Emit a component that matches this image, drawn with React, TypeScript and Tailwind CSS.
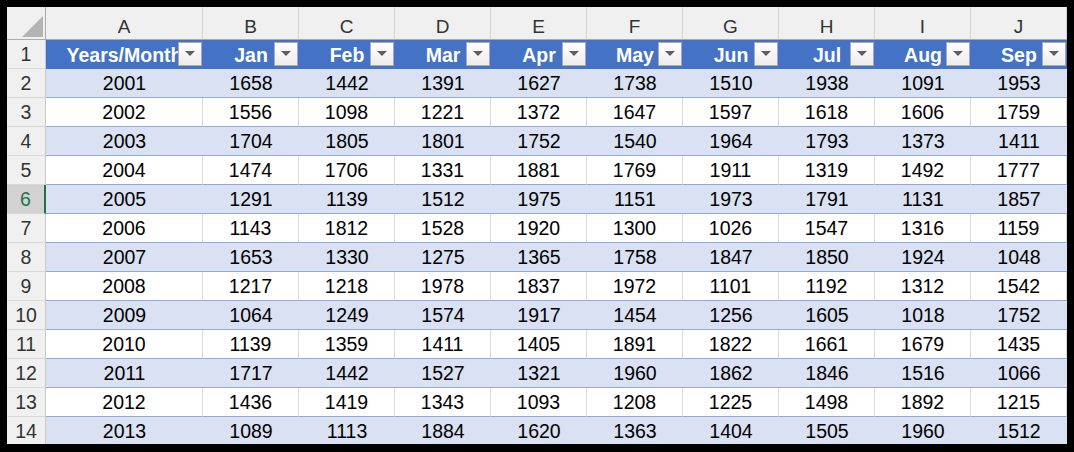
import React from "react";

const letters = ["A", "B", "C", "D", "E", "F", "G", "H", "I", "J"];
const months = ["Jan", "Feb", "Mar", "Apr", "May", "Jun", "Jul", "Aug", "Sep"];
const data: number[][] = [
  [2001, 1658, 1442, 1391, 1627, 1738, 1510, 1938, 1091, 1953],
  [2002, 1556, 1098, 1221, 1372, 1647, 1597, 1618, 1606, 1759],
  [2003, 1704, 1805, 1801, 1752, 1540, 1964, 1793, 1373, 1411],
  [2004, 1474, 1706, 1331, 1881, 1769, 1911, 1319, 1492, 1777],
  [2005, 1291, 1139, 1512, 1975, 1151, 1973, 1791, 1131, 1857],
  [2006, 1143, 1812, 1528, 1920, 1300, 1026, 1547, 1316, 1159],
  [2007, 1653, 1330, 1275, 1365, 1758, 1847, 1850, 1924, 1048],
  [2008, 1217, 1218, 1978, 1837, 1972, 1101, 1192, 1312, 1542],
  [2009, 1064, 1249, 1574, 1917, 1454, 1256, 1605, 1018, 1752],
  [2010, 1139, 1359, 1411, 1405, 1891, 1822, 1661, 1679, 1435],
  [2011, 1717, 1442, 1527, 1321, 1960, 1862, 1846, 1516, 1066],
  [2012, 1436, 1419, 1343, 1093, 1208, 1225, 1498, 1892, 1215],
  [2013, 1089, 1113, 1884, 1620, 1363, 1404, 1505, 1960, 1512],
];

const widthCls = (i: number) => (i === 0 ? "w-[157px]" : "w-[96px]");

function FilterButton() {
  return (
    <div className="absolute right-[1px] top-[2px] w-[24px] h-[24px] border border-[#ABABAB] bg-gradient-to-b from-[#FFFFFF] to-[#ECECEC] flex items-center justify-center">
      <svg width="10" height="6" viewBox="0 0 10 6">
        <polygon points="0,0 10,0 5,5" fill="#5F5F5F" />
      </svg>
    </div>
  );
}

function RowHeader({ n, selected }: { n: number; selected?: boolean }) {
  return (
    <div
      className={
        "w-[39px] shrink-0 h-full flex items-center justify-center pt-[2px] border-b border-[#D8D8D8] " +
        (selected
          ? "bg-[#D2D2D2] text-[#217346] border-r-2 border-r-[#217346]"
          : "bg-[#F0F0F0] text-[#333333] border-r border-r-[#C8C8C8]")
      }
    >
      {n}
    </div>
  );
}

export default function App() {
  return (
    <div
      className="w-[1074px] h-[452px] bg-black pt-[7px] pl-[7px] pr-[7px] pb-[8px]"
      style={{ fontFamily: '"Liberation Sans", Arial, sans-serif' }}
    >
      <div className="w-[1060px] h-[437px] bg-white overflow-hidden text-[19.5px] leading-none">
        {/* column header */}
        <div className="flex h-[33px] bg-[#F0F0F0] border-b border-[#ABABAB] text-[#333333]">
          <div className="w-[39px] shrink-0 border-r border-[#ABABAB] flex items-end justify-end pr-[2px] pb-[2px]">
            <svg width="21" height="21" viewBox="0 0 21 21">
              <polygon points="21,0 21,21 0,21" fill="#B4B4B4" />
            </svg>
          </div>
          {letters.map((l, i) => (
            <div
              key={l}
              className={
                widthCls(i) +
                " shrink-0 border-r border-[#D6D6D6] flex items-center justify-center pt-[6px] text-[19px]"
              }
            >
              {l}
            </div>
          ))}
        </div>

        {/* table header row */}
        <div className="flex h-[29px]">
          <RowHeader n={1} />
          {["Years/Month", ...months].map((m, i) => (
            <div
              key={m}
              className={
                widthCls(i) +
                " shrink-0 relative overflow-hidden bg-[#4472C4] text-white font-bold flex items-center justify-center pt-[2px] whitespace-nowrap"
              }
            >
              <span>{m}</span>
              <FilterButton />
            </div>
          ))}
        </div>

        {/* data rows */}
        {data.map((row, r) => {
          const banded = r % 2 === 0;
          return (
            <div key={r} className="flex h-[29px]">
              <RowHeader n={r + 2} selected={r + 2 === 6} />
              {row.map((v, i) => (
                <div
                  key={i}
                  className={
                    widthCls(i) +
                    " shrink-0 h-full flex items-center justify-center pt-[2px] border-b border-[#8EA9DB] text-black " +
                    (banded ? "bg-[#D9E1F2]" : "bg-white border-r border-r-[#D9D9D9]")
                  }
                >
                  {v}
                </div>
              ))}
            </div>
          );
        })}
      </div>
    </div>
  );
}
